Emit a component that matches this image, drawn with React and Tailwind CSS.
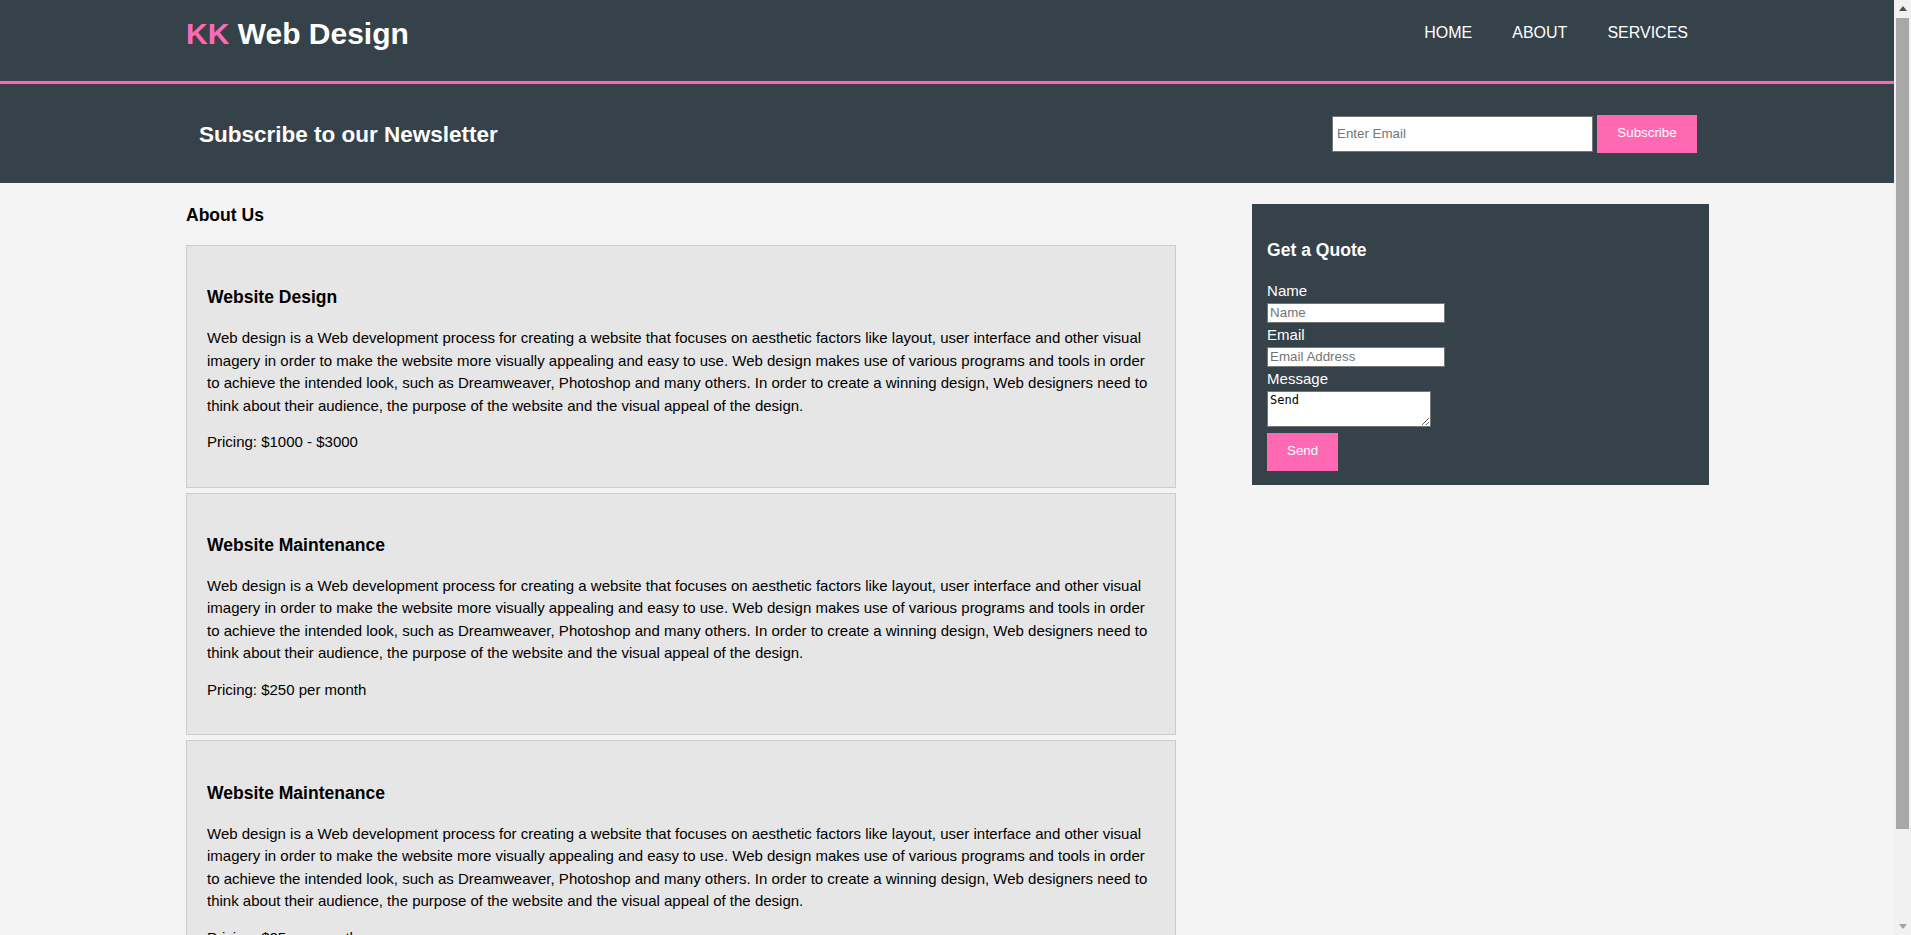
import React from "react";

const blurb =
  "Web design is a Web development process for creating a website that focuses on aesthetic factors like layout, user interface and other visual imagery in order to make the website more visually appealing and easy to use. Web design makes use of various programs and tools in order to achieve the intended look, such as Dreamweaver, Photoshop and many others. In order to create a winning design, Web designers need to think about their audience, the purpose of the website and the visual appeal of the design.";

const services = [
  { title: "Website Design", price: "Pricing: $1000 - $3000" },
  { title: "Website Maintenance", price: "Pricing: $250 per month" },
  { title: "Website Maintenance", price: "Pricing: $25 per month" },
];

export default function App() {
  return (
    <div className="flex h-[935px] w-[1911px] overflow-hidden bg-[#f4f4f4] font-['Liberation_Sans',Arial,sans-serif] text-[15px] leading-[22.5px] text-black">
      <div className="h-full w-[1894px] overflow-hidden">
        {/* Header */}
        <header className="h-[84px] border-b-[3px] border-[#ff69b4] bg-[#35424a]">
          <div className="ml-[186px] flex w-[1522px] justify-between">
            <h1 className="pt-[19px] text-[30px] font-bold leading-[30px] text-white">
              <span className="text-[#ff69b4]">KK</span> Web Design
            </h1>
            <nav className="pt-[25px]">
              <ul className="flex text-[16px] uppercase leading-[16px] text-white">
                <li className="px-[20px]">Home</li>
                <li className="px-[20px]">About</li>
                <li className="px-[20px]">Services</li>
              </ul>
            </nav>
          </div>
        </header>

        {/* Newsletter */}
        <section className="h-[99px] bg-[#35424a] text-white">
          <div className="ml-[186px] flex h-full w-[1523px] items-center justify-between">
            <h2 className="pl-[13px] pt-[4px] text-[22.5px] font-bold leading-[22.5px]">Subscribe to our Newsletter</h2>
            <form className="mr-[12px] flex items-center gap-[4px]">
              <input
                type="email"
                placeholder="Enter Email"
                className="h-[36px] w-[261px] border border-[#767676] bg-white pl-[4px] text-[13.33px] text-black outline-none placeholder:text-[#757575]"
              />
              <button type="button" className="h-[38px] w-[100px] bg-[#ff69b4] text-[13.33px] text-white">
                Subscribe
              </button>
            </form>
          </div>
        </section>

        {/* Content */}
        <div className="ml-[186px] flex w-[1523px] items-start justify-between">
          <main className="w-[65%]">
            <h3 className="mb-[16.5px] mt-[19px] text-[17.55px] font-bold leading-[26.3px]">About Us</h3>
            {services.map((s, i) => (
              <article key={i} className="mb-[5px] border border-[#cccccc] bg-[#e6e6e6] px-[20px] pb-[18px] pt-[19px]">
                <h3 className="mt-[19.5px] text-[17.55px] font-bold leading-[26.3px]">{s.title}</h3>
                <p className="mt-[16.5px]">{blurb}</p>
                <p className="mb-[15px] mt-[14px]">{s.price}</p>
              </article>
            ))}
          </main>

          <aside className="mt-[21px] w-[30%] bg-[#35424a] p-[15px] pb-[14px] text-white">
            <h3 className="my-[17.55px] text-[17.55px] font-bold leading-[26.3px]">Get a Quote</h3>
            <form>
              <label className="block">Name</label>
              <input
                type="text"
                placeholder="Name"
                className="mb-[1.6px] block h-[20px] w-[178px] border border-[#767676] bg-white px-[2px] text-[13.33px] text-black outline-none placeholder:text-[#757575]"
              />
              <label className="block">Email</label>
              <input
                type="email"
                placeholder="Email Address"
                className="mb-[1.1px] block h-[20px] w-[178px] border border-[#767676] bg-white px-[2px] text-[13.33px] text-black outline-none placeholder:text-[#757575]"
              />
              <label className="block">Message</label>
              <textarea
                defaultValue="Send"
                className="block h-[36px] w-[164px] resize border border-[#767676] bg-white px-[2px] py-[1px] font-['DejaVu_Sans_Mono',monospace] text-[12px] leading-[15px] text-black outline-none"
              />
              <button type="button" className="mt-[6px] h-[38px] w-[71px] bg-[#ff69b4] text-[13.33px] text-white">
                Send
              </button>
            </form>
          </aside>
        </div>
      </div>

      {/* Scrollbar */}
      <div className="flex h-full w-[17px] flex-col bg-[#f1f1f1]">
        <div className="flex h-[17px] items-center justify-center">
          <svg width="8" height="5" viewBox="0 0 8 5">
            <path d="M0 5 L4 0 L8 5 Z" fill="#505050" />
          </svg>
        </div>
        <div className="mx-[2px] mt-[1px] h-[811px] bg-[#a8a8a8]" />
        <div className="flex-1" />
        <div className="flex h-[17px] items-center justify-center">
          <svg width="8" height="5" viewBox="0 0 8 5">
            <path d="M0 0 L8 0 L4 5 Z" fill="#a3a3a3" />
          </svg>
        </div>
      </div>
    </div>
  );
}
